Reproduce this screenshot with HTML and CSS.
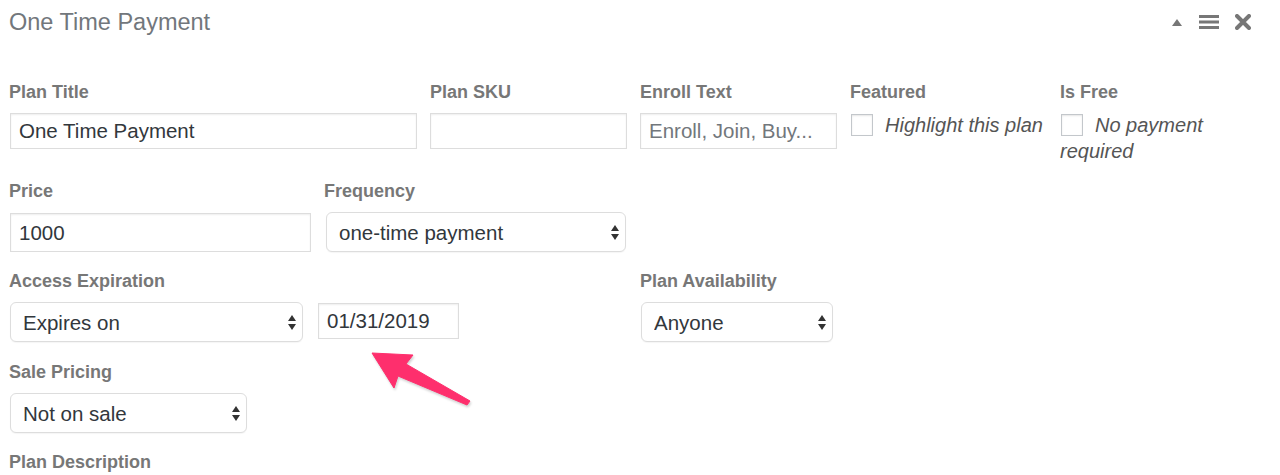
FILE: index.html
```html
<!DOCTYPE html>
<html lang="en">
<head>
<meta charset="utf-8">
<title>One Time Payment</title>
<link rel="stylesheet" href="styles.css">
</head>
<body>
<div class="page">
  <div class="header">
    <h2 class="title">One Time Payment</h2>
    <div class="tools">
      <svg class="ico-up" width="10" height="7" viewBox="0 0 10 7"><polygon points="5,0 10,7 0,7" fill="#777"/></svg>
      <svg class="ico-menu" width="20" height="14" viewBox="0 0 20 14"><rect x="0" y="0" width="20" height="3" fill="#777"/><rect x="0" y="5.5" width="20" height="3" fill="#777"/><rect x="0" y="11" width="20" height="3" fill="#777"/></svg>
      <svg class="ico-close" width="16" height="16" viewBox="0 0 16 16"><path d="M2 2 L14 14 M14 2 L2 14" stroke="#777" stroke-width="4" stroke-linecap="round"/></svg>
    </div>
  </div>

  <div class="form">
    <div class="row row-1">
      <div class="field">
        <label class="lbl">Plan Title</label>
        <input class="txt w-full" type="text" value="One Time Payment">
      </div>
      <div class="field">
        <label class="lbl">Plan SKU</label>
        <input class="txt w-full" type="text" value="">
      </div>
      <div class="field">
        <label class="lbl">Enroll Text</label>
        <input class="txt w-full" type="text" placeholder="Enroll, Join, Buy...">
      </div>
      <div class="field">
        <label class="lbl">Featured</label>
        <div class="check-line"><span class="cbox"></span><em>Highlight this plan</em></div>
      </div>
      <div class="field">
        <label class="lbl">Is Free</label>
        <div class="check-line"><span class="cbox"></span><em>No payment required</em></div>
      </div>
    </div>

    <div class="row row-2">
      <div class="field">
        <label class="lbl">Price</label>
        <input class="txt w-price" type="text" value="1000">
      </div>
      <div class="field">
        <label class="lbl">Frequency</label>
        <div class="sel w-freq">
          <select><option>one-time payment</option></select>
          <svg class="updown" width="8" height="15" viewBox="0 0 8 15"><polygon points="4,0 8,6 0,6" fill="#333"/><polygon points="0,9 8,9 4,15" fill="#333"/></svg>
        </div>
      </div>
    </div>

    <div class="row row-3">
      <div class="field">
        <label class="lbl">Access Expiration</label>
        <div class="pair">
          <div class="sel w-exp">
            <select><option>Expires on</option></select>
            <svg class="updown" width="8" height="15" viewBox="0 0 8 15"><polygon points="4,0 8,6 0,6" fill="#333"/><polygon points="0,9 8,9 4,15" fill="#333"/></svg>
          </div>
          <input class="txt date" type="text" value="01/31/2019">
        </div>
      </div>
      <div class="field">
        <label class="lbl">Plan Availability</label>
        <div class="sel w-avail">
          <select><option>Anyone</option></select>
          <svg class="updown" width="8" height="15" viewBox="0 0 8 15"><polygon points="4,0 8,6 0,6" fill="#333"/><polygon points="0,9 8,9 4,15" fill="#333"/></svg>
        </div>
      </div>
    </div>

    <div class="row row-4">
      <div class="field">
        <label class="lbl">Sale Pricing</label>
        <div class="sel w-sale">
          <select><option>Not on sale</option></select>
          <svg class="updown" width="8" height="15" viewBox="0 0 8 15"><polygon points="4,0 8,6 0,6" fill="#333"/><polygon points="0,9 8,9 4,15" fill="#333"/></svg>
        </div>
      </div>
    </div>

    <div class="row row-5">
      <label class="lbl">Plan Description</label>
    </div>
  </div>

  <svg class="callout" width="110" height="65" viewBox="365 345 110 65">
    <polygon points="372,353 413,355 406,364 470,401 467,405 398,376 394,388" fill="#fe2f6d" stroke="#fe2f6d" stroke-width="1" stroke-linejoin="round"/>
  </svg>
</div>
</body>
</html>
```

FILE: styles.css
```css
* { box-sizing: border-box; }

html, body {
  margin: 0;
  padding: 0;
  background: #ffffff;
}

body {
  font-family: "Liberation Sans", Arial, sans-serif;
  color: #333;
}

.page {
  position: relative;
  width: 1280px;
  height: 475px;
  overflow: hidden;
}

.header {
  display: flex;
  align-items: center;
  justify-content: space-between;
  height: 44px;
  padding: 0 29px 0 9px;
}

.title {
  margin: 0;
  font-size: 23.5px;
  font-weight: normal;
  line-height: 44px;
  color: #72777c;
}

.tools {
  display: flex;
  align-items: center;
  gap: 16px;
}

.ico-up { margin-right: 1px; margin-top: 1px; }

.form {
  padding: 36px 0 0 10px;
}

.row {
  display: grid;
  align-items: start;
}

.row-1 {
  grid-template-columns: 420px 210px 210px 210px 200px;
  margin-bottom: 15px;
}

.row-2 {
  grid-template-columns: 315px 315px;
  margin-bottom: 17px;
}

.row-3 {
  grid-template-columns: 630px 210px;
  margin-bottom: 18px;
}

.row-4 {
  grid-template-columns: 315px;
  margin-bottom: 17px;
}

.field {
  display: flex;
  flex-direction: column;
  align-items: flex-start;
}

.lbl {
  display: block;
  font-size: 18px;
  font-weight: bold;
  line-height: 24px;
  color: #777777;
  margin: 0 0 9px -1px;
}

.row-1 .field + .field .lbl,
.row-3 .field + .field .lbl { margin-left: 0; }

.row-5 .lbl { margin-bottom: 0; }

.txt {
  height: 36px;
  border: 1px solid #dddddd;
  border-radius: 0;
  box-shadow: inset 0 1px 2px rgba(0, 0, 0, 0.07);
  background: #fff;
  padding: 0 8px;
  font-family: "Liberation Sans", Arial, sans-serif;
  font-size: 20.5px;
  color: #32373c;
  outline: none;
}

.txt::placeholder { color: #72777c; }

.w-full { width: calc(100% - 13px); }

.w-price { width: 301px; height: 39px; margin-top: 1px; }

.date {
  width: 141px;
  height: 36px;
  margin-top: 1px;
}

.pair {
  display: flex;
  align-items: flex-start;
  gap: 15px;
}

.sel {
  position: relative;
  height: 40px;
}

.sel select {
  appearance: none;
  -webkit-appearance: none;
  width: 100%;
  height: 40px;
  border: 1px solid #dddddd;
  border-radius: 6px;
  background: #fff;
  box-shadow: 0 1px 1px rgba(0, 0, 0, 0.04);
  padding: 0 30px 0 12px;
  font-family: "Liberation Sans", Arial, sans-serif;
  font-size: 20.5px;
  color: #32373c;
  outline: none;
}

.updown {
  position: absolute;
  right: 7px;
  top: 13px;
}

.w-freq { width: 300px; margin-left: 1px; }
.w-exp { width: 293px; }
.w-avail { width: 192px; margin-left: 1px; }
.w-sale { width: 237px; }

.check-line {
  font-size: 20px;
  line-height: 26px;
  color: #555;
  margin-top: -1px;
}

.check-line em {
  font-style: italic;
}

.cbox {
  display: inline-block;
  width: 22px;
  height: 22px;
  border: 1px solid #c3c7cb;
  box-shadow: inset 0 1px 2px rgba(0, 0, 0, 0.1);
  background: #fff;
  vertical-align: -4px;
  margin: 0 12px 0 1px;
}

.callout {
  position: absolute;
  left: 365px;
  top: 345px;
  pointer-events: none;
  filter: drop-shadow(1px 2px 1px rgba(0, 0, 0, 0.18));
}
```
